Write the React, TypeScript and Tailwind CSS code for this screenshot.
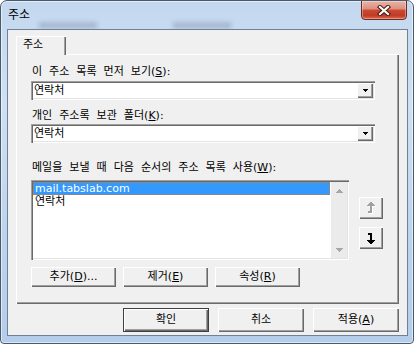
import React from "react";

const raised =
  "shadow-[inset_1px_1px_0_#ffffff,inset_-1px_-1px_0_#696969,inset_-2px_-2px_0_#a0a0a0]";
const sunken =
  "shadow-[inset_1px_1px_0_#a0a0a0,inset_2px_2px_0_#696969,inset_-1px_-1px_0_#ffffff,inset_-2px_-2px_0_#e3e3e3]";

function Label({ children, className = "" }: { children: React.ReactNode; className?: string }) {
  return <div className={`h-[12px] pl-px leading-[12px] whitespace-nowrap ${className}`}>{children}</div>;
}

function Combo({ value }: { value: string }) {
  return (
    <div className={`flex h-[19px] w-[344px] bg-white p-[2px] ${sunken}`}>
      <div className="flex-1 pl-px leading-[15px]">{value}</div>
      <div className={`flex h-[15px] w-[16px] items-center justify-center bg-[#f0f0f0] pb-px ${raised}`}>
        <svg width="5" height="3" viewBox="0 0 5 3" shapeRendering="crispEdges">
          <path d="M0 0h5v1H0zM1 1h3v1H1zM2 2h1v1H2z" fill="#000" />
        </svg>
      </div>
    </div>
  );
}

function ArrowDown({ color }: { color: string }) {
  return (
    <g fill={color}>
      <rect x="1" y="0" width="4" height="2" />
      <rect x="3" y="2" width="2" height="5" />
      <rect x="0" y="7" width="8" height="1" />
      <rect x="1" y="8" width="6" height="1" />
      <rect x="2" y="9" width="4" height="1" />
      <rect x="3" y="10" width="2" height="1" />
    </g>
  );
}

function ArrowUp({ color, dx = 0, dy = 0 }: { color: string; dx?: number; dy?: number }) {
  return (
    <g fill={color} transform={`translate(${dx} ${dy})`}>
      <rect x="3" y="0" width="2" height="1" />
      <rect x="2" y="1" width="4" height="1" />
      <rect x="1" y="2" width="6" height="1" />
      <rect x="0" y="3" width="8" height="1" />
      <rect x="3" y="4" width="2" height="5" />
      <rect x="1" y="9" width="4" height="2" />
    </g>
  );
}

function Btn({ children, w, h, def = false }: { children: React.ReactNode; w: string; h: string; def?: boolean }) {
  return (
    <div className={`${w} ${h} ${def ? "border border-[#404040]" : ""}`}>
      <div className={`flex h-full w-full items-center justify-center bg-[#f0f0f0] pb-px leading-[12px] ${raised}`}>
        {children}
      </div>
    </div>
  );
}

export default function App() {
  return (
    <div className="relative h-[344px] w-[414px] overflow-hidden rounded-t-[7px] rounded-b-[4px] border border-[#4a5a6e] bg-[linear-gradient(to_bottom,#c3d8ef_0%,#cfe0f2_30%,#bcd3ec_70%,#b4cdea_100%)] font-['DejaVu_Sans','Noto_Sans_CJK_KR',sans-serif] text-[11px] text-black shadow-[inset_0_0_0_1px_rgba(255,255,255,0.55)] [word-spacing:3.5px]">
      <div className="absolute left-[38px] top-[21px] h-[7px] w-[58px] bg-[#7d8da0]/40 blur-[2px]" />
      <div className="absolute left-[172px] top-[21px] h-[7px] w-[58px] bg-[#7d8da0]/40 blur-[2px]" />
      <div className="flex h-[28px] items-start justify-between">
        <div className="pl-[7px] pt-[8px] text-[12px] leading-[12px]">주소</div>
        <div className="-mt-px mr-[6px] flex h-[20px] w-[46px] items-center justify-center rounded-b-[4px] border border-[#6e2a1e] bg-[linear-gradient(to_bottom,#eab4a7_0%,#de8d7b_45%,#c94a33_50%,#c13c26_80%,#d8664e_100%)] shadow-[inset_0_0_0_1px_rgba(255,255,255,0.35)]">
          <svg width="14" height="11" viewBox="0 0 14 11">
            <path d="M3 2 L11 9 M11 2 L3 9" stroke="#4a1a12" strokeWidth="4.2" strokeLinecap="square" />
            <path d="M3 2 L11 9 M11 2 L3 9" stroke="#ffffff" strokeWidth="2.2" strokeLinecap="square" />
          </svg>
        </div>
      </div>

      <div className="relative ml-[6px] mr-[5px] flex h-[307px] flex-col border border-[#6f8196] bg-[#f0f0f0] px-[8px] pb-[3px] pt-[6px]">
        <div className="flex">
          <div className="relative z-10 -mb-px h-[19px] w-[50px] bg-[#f0f0f0] pl-[7px] pt-[3px] text-[11px] leading-[12px] shadow-[inset_1px_1px_0_#ffffff,inset_-1px_0_0_#696969,inset_-2px_0_0_#a0a0a0]">
            주소
          </div>
        </div>
        <div className="flex h-[250px] flex-col bg-[#f0f0f0] pl-[15px] pt-[12px] shadow-[inset_1px_1px_0_#ffffff,inset_-1px_-1px_0_#696969,inset_-2px_-2px_0_#a0a0a0]">
          <Label>
            이 주소 목록 먼저 보기(<u>S</u>):
          </Label>
          <div className="mt-[3px]">
            <Combo value="연락처" />
          </div>
          <Label className="mt-[10px]">
            개인 주소록 보관 폴더(<u>K</u>):
          </Label>
          <div className="mt-[2px]">
            <Combo value="연락처" />
          </div>
          <Label className="mt-[19px]">
            메일을 보낼 때 다음 순서의 주소 목록 사용(<u>W</u>):
          </Label>
          <div className="mt-[6px] flex">
            <div className={`flex h-[80px] w-[318px] bg-white p-[2px] ${sunken}`}>
              <div className="flex flex-1 flex-col">
                <div className="h-[13px] border border-dotted border-[#d27a1c] bg-[#3399ff] pl-px leading-[11px] text-white">
                  mail.tabslab.com
                </div>
                <div className="h-[13px] pl-[2px] leading-[13px]">연락처</div>
              </div>
              <div className="flex w-[17px] flex-col items-center justify-between border-l border-white bg-[#ebebeb] pb-[6px] pt-[7px]">
                <svg width="7" height="4" viewBox="0 0 7 4" shapeRendering="crispEdges">
                  <path d="M3 0h1v1H3zM2 1h3v1H2zM1 2h5v1H1zM0 3h7v1H0z" fill="#a6a6a6" />
                </svg>
                <svg width="7" height="4" viewBox="0 0 7 4" shapeRendering="crispEdges">
                  <path d="M0 0h7v1H0zM1 1h5v1H1zM2 2h3v1H2zM3 3h1v1H3z" fill="#a6a6a6" />
                </svg>
              </div>
            </div>
            <div className="ml-[10px] flex flex-col gap-[8px] pt-[17px]">
              <div className={`flex h-[22px] w-[24px] items-center justify-center bg-[#f0f0f0] ${raised}`}>
                <svg width="9" height="12" viewBox="0 0 9 12" shapeRendering="crispEdges">
                  <ArrowUp color="#ffffff" dx={1} dy={1} />
                  <ArrowUp color="#a0a0a0" />
                </svg>
              </div>
              <div className={`flex h-[22px] w-[24px] items-center justify-center bg-[#f0f0f0] ${raised}`}>
                <svg width="8" height="11" viewBox="0 0 8 11" shapeRendering="crispEdges">
                  <ArrowDown color="#000000" />
                </svg>
              </div>
            </div>
          </div>
          <div className="mt-[7px] flex gap-[7px]">
            <Btn w="w-[85px]" h="h-[20px]">
              추가(<u>D</u>)...
            </Btn>
            <Btn w="w-[85px]" h="h-[20px]">
              제거(<u>E</u>)
            </Btn>
            <Btn w="w-[85px]" h="h-[20px]">
              속성(<u>R</u>)
            </Btn>
          </div>
        </div>
        <div className="mt-[4px] flex justify-end gap-[9px]">
          <Btn w="w-[86px]" h="h-[24px]" def>
            확인
          </Btn>
          <Btn w="w-[86px]" h="h-[24px]">
            취소
          </Btn>
          <Btn w="w-[86px]" h="h-[24px]">
            적용(<u>A</u>)
          </Btn>
        </div>
      </div>
    </div>
  );
}
